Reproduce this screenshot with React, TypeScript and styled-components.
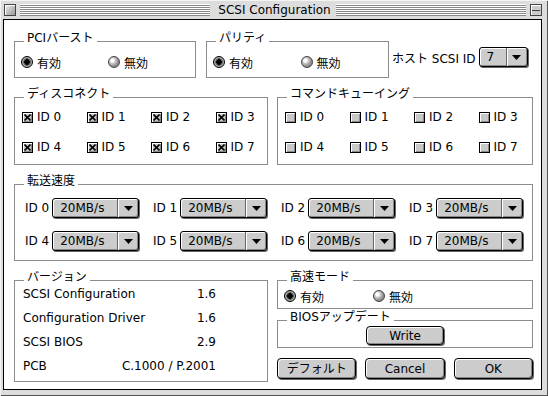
import styled, { createGlobalStyle } from 'styled-components';

const GlobalStyle = createGlobalStyle`
  html, body {
    margin: 0;
    padding: 0;
    background: #fff;
  }
  body {
    font-family: "DejaVu Sans", "Noto Sans CJK JP", sans-serif;
    font-size: 12px;
    color: #000;
  }
`;

const Window = styled.div`
  width: 548px;
  height: 396px;
  box-sizing: border-box;
  background: #dddddd;
  display: flex;
  flex-direction: column;
  box-shadow: inset 1px 1px 0 #f4f4f4, inset -1px -1px 0 #555;
`;

const TitleBar = styled.div`
  height: 19px;
  flex-shrink: 0;
  display: flex;
  align-items: flex-start;
  padding: 4px 6px 0 4px;
  box-sizing: border-box;
`;

const CloseBox = styled.div`
  width: 12px;
  height: 12px;
  box-sizing: border-box;
  border: 1px solid #444;
  background: linear-gradient(135deg, #eee 0%, #bbb 60%, #999 100%);
  box-shadow: inset 1px 1px 0 #fff;
`;

const ShadeBox = styled.div`
  width: 12px;
  height: 12px;
  box-sizing: border-box;
  border: 1px solid #444;
  background: #ccc;
  box-shadow: inset 1px 1px 0 #fff;
  display: flex;
  flex-direction: column;
  justify-content: center;
  padding: 0 1px;

  &::after {
    content: '';
    display: block;
    height: 1px;
    background: #444;
  }
`;

const Stripes = styled.div<{ $left?: boolean }>`
  flex: 1;
  height: 12px;
  margin: ${(p) => (p.$left ? '0 8px 0 4px' : '0 4px 0 5px')};
  background: repeating-linear-gradient(to bottom, #fff 0 1px, #888 1px 2px);
`;

const Title = styled.div`
  line-height: 12px;
  white-space: nowrap;
`;

const Content = styled.div`
  flex: 1;
  margin: 0 6px 6px 3px;
  border: 1px solid #000;
  background: #fff;
  padding: 21px 8px 0 10px;
  display: flex;
  flex-direction: column;
`;

const Row = styled.div<{ $top?: number }>`
  display: flex;
  margin-top: ${(p) => p.$top ?? 0}px;
`;

const Columns = styled.div<{ $top?: number }>`
  display: grid;
  grid-template-columns: 254px 256px;
  column-gap: 9px;
  margin-top: ${(p) => p.$top ?? 0}px;
`;

const Group = styled.div<{ $w?: number; $h: number }>`
  position: relative;
  box-sizing: border-box;
  width: ${(p) => (p.$w ? `${p.$w}px` : 'auto')};
  height: ${(p) => p.$h}px;
  border: 1px solid #8c8c8c;
`;

const GroupLabel = styled.span`
  position: absolute;
  top: -11px;
  left: 9px;
  padding: 0 3px;
  background: #fff;
  line-height: 14px;
  white-space: nowrap;
`;

const RadioRow = styled.div<{ $top: number }>`
  display: flex;
  padding: ${(p) => p.$top}px 0 0 6px;
`;

const Option = styled.label`
  width: 89px;
  height: 14px;
  display: flex;
  align-items: center;
  gap: 4px;
  white-space: nowrap;
`;

const Radio = styled.span<{ $on?: boolean }>`
  width: 12px;
  height: 12px;
  box-sizing: border-box;
  border-radius: 50%;
  border: 1px solid ${(p) => (p.$on ? '#000' : '#444')};
  background: ${(p) =>
    p.$on
      ? 'radial-gradient(circle, #000 0 2.6px, #6a6a6a 3px 3.6px, #aaa 4px)'
      : 'radial-gradient(circle at 35% 35%, #fff 0 1.5px, #c8c8c8 3px, #8a8a8a 6px)'};
  flex-shrink: 0;
`;

const HostId = styled.div`
  display: flex;
  align-items: center;
  align-self: flex-start;
  margin: 6px 0 0 3px;
  gap: 3px;
  white-space: nowrap;
`;

const Popup = styled.div<{ $w: number }>`
  width: ${(p) => p.$w}px;
  height: 20px;
  box-sizing: border-box;
  display: flex;
  border: 1px solid #000;
  border-radius: 3px;
  background: #cccccc;
  box-shadow: inset 1px 1px 0 #fff, inset -1px -1px 0 #888, 1px 1px 0 #666;
  flex-shrink: 0;
`;

const PopupValue = styled.span`
  flex: 1;
  padding-left: 7px;
  line-height: 18px;
`;

const PopupArrow = styled.span`
  width: 20px;
  border-left: 1px solid #666;
  box-shadow: inset 1px 0 0 #fff;
  display: flex;
  align-items: center;
  justify-content: center;
`;

const CheckGrid = styled.div`
  display: grid;
  grid-template-columns: repeat(4, 64.5px);
  row-gap: 16px;
  padding: 12px 0 0 7px;
`;

const CheckItem = styled.label`
  height: 14px;
  display: flex;
  align-items: center;
  gap: 4px;
  white-space: nowrap;
`;

const CheckBox = styled.span`
  width: 11px;
  height: 11px;
  box-sizing: border-box;
  border: 1px solid #000;
  background: #c8c8c8;
  box-shadow: inset 1px 1px 0 #fff, inset -1px -1px 0 #8a8a8a;
  display: flex;
  align-items: center;
  justify-content: center;
  flex-shrink: 0;
`;

const SpeedGrid = styled.div`
  display: grid;
  grid-template-columns: repeat(3, 128px) auto;
  row-gap: 13px;
  padding: 13px 0 0 10px;
`;

const SpeedItem = styled.div`
  display: flex;
  align-items: center;
  gap: 3px;
  white-space: nowrap;
`;

const VersionTable = styled.div`
  padding: 1px 51px 0 8px;
`;

const VersionRow = styled.div`
  height: 24px;
  display: flex;
  align-items: center;
  justify-content: space-between;
  white-space: nowrap;
`;

const RightStack = styled.div`
  display: flex;
  flex-direction: column;
`;

const Centered = styled.div`
  display: flex;
  justify-content: center;
  padding-top: 5px;
`;

const Button = styled.button<{ $w?: number }>`
  width: ${(p) => (p.$w ? `${p.$w}px` : 'auto')};
  height: ${(p) => (p.$w ? 19 : 21)}px;
  box-sizing: border-box;
  border: 1px solid #000;
  border-radius: 4px;
  background: #cccccc;
  box-shadow: inset 1px 1px 0 #fff, inset -1px -1px 0 #888, 1px 1px 0 #666;
  font: inherit;
  color: #000;
  padding: 0;
  line-height: 16px;
`;

const ButtonRow = styled.div`
  display: grid;
  grid-template-columns: repeat(3, 1fr);
  column-gap: 9px;
  margin-top: 10px;
`;

const Arrow = () => (
  <svg width="9" height="5" viewBox="0 0 9 5">
    <polygon points="0,0 9,0 4.5,5" fill="#000" />
  </svg>
);

const Cross = () => (
  <svg width="7" height="7" viewBox="0 0 7 7">
    <path d="M0.5 0.5 L6.5 6.5 M6.5 0.5 L0.5 6.5" stroke="#000" strokeWidth="1.6" />
  </svg>
);

const ids = [0, 1, 2, 3, 4, 5, 6, 7];

function RadioPair({ on }: { on: 0 | 1 }) {
  return (
    <>
      <Option><Radio $on={on === 0} />有効</Option>
      <Option><Radio $on={on === 1} />無効</Option>
    </>
  );
}

function CheckSet({ checked }: { checked: boolean }) {
  return (
    <CheckGrid>
      {ids.map((id) => (
        <CheckItem key={id}>
          <CheckBox>{checked && <Cross />}</CheckBox>
          ID {id}
        </CheckItem>
      ))}
    </CheckGrid>
  );
}

function PopupMenu({ value, width }: { value: string; width: number }) {
  return (
    <Popup $w={width}>
      <PopupValue>{value}</PopupValue>
      <PopupArrow><Arrow /></PopupArrow>
    </Popup>
  );
}

const versions = [
  ['SCSI Configuration', '1.6'],
  ['Configuration Driver', '1.6'],
  ['SCSI BIOS', '2.9'],
  ['PCB', 'C.1000 / P.2001'],
];

export default function App() {
  return (
    <>
      <GlobalStyle />
      <Window>
        <TitleBar>
          <CloseBox />
          <Stripes $left />
          <Title>SCSI Configuration</Title>
          <Stripes />
          <ShadeBox />
        </TitleBar>

        <Content>
          <Row>
            <Group $w={182} $h={37}>
              <GroupLabel>PCIバースト</GroupLabel>
              <RadioRow $top={13}><RadioPair on={0} /></RadioRow>
            </Group>
            <Group $w={183} $h={37} style={{ marginLeft: 10 }}>
              <GroupLabel>パリティ</GroupLabel>
              <RadioRow $top={13}><RadioPair on={0} /></RadioRow>
            </Group>
            <HostId>
              ホスト SCSI ID
              <PopupMenu value="7" width={49} />
            </HostId>
          </Row>

          <Columns $top={19}>
            <Group $h={68}>
              <GroupLabel>ディスコネクト</GroupLabel>
              <CheckSet checked />
            </Group>
            <Group $h={68}>
              <GroupLabel>コマンドキューイング</GroupLabel>
              <CheckSet checked={false} />
            </Group>
          </Columns>

          <Row $top={19}>
            <Group $w={519} $h={77}>
              <GroupLabel>転送速度</GroupLabel>
              <SpeedGrid>
                {ids.map((id) => (
                  <SpeedItem key={id}>
                    ID {id}
                    <PopupMenu value="20MB/s" width={87} />
                  </SpeedItem>
                ))}
              </SpeedGrid>
            </Group>
          </Row>

          <Columns $top={19}>
            <Group $h={102}>
              <GroupLabel>バージョン</GroupLabel>
              <VersionTable>
                {versions.map(([k, v]) => (
                  <VersionRow key={k}>
                    <span>{k}</span>
                    <span>{v}</span>
                  </VersionRow>
                ))}
              </VersionTable>
            </Group>
            <RightStack>
              <Group $h={29}>
                <GroupLabel>高速モード</GroupLabel>
                <RadioRow $top={8}><RadioPair on={0} /></RadioRow>
              </Group>
              <Group $h={28} style={{ marginTop: 11 }}>
                <GroupLabel>BIOSアップデート</GroupLabel>
                <Centered><Button $w={78}>Write</Button></Centered>
              </Group>
              <ButtonRow>
                <Button>デフォルト</Button>
                <Button>Cancel</Button>
                <Button>OK</Button>
              </ButtonRow>
            </RightStack>
          </Columns>
        </Content>
      </Window>
    </>
  );
}
